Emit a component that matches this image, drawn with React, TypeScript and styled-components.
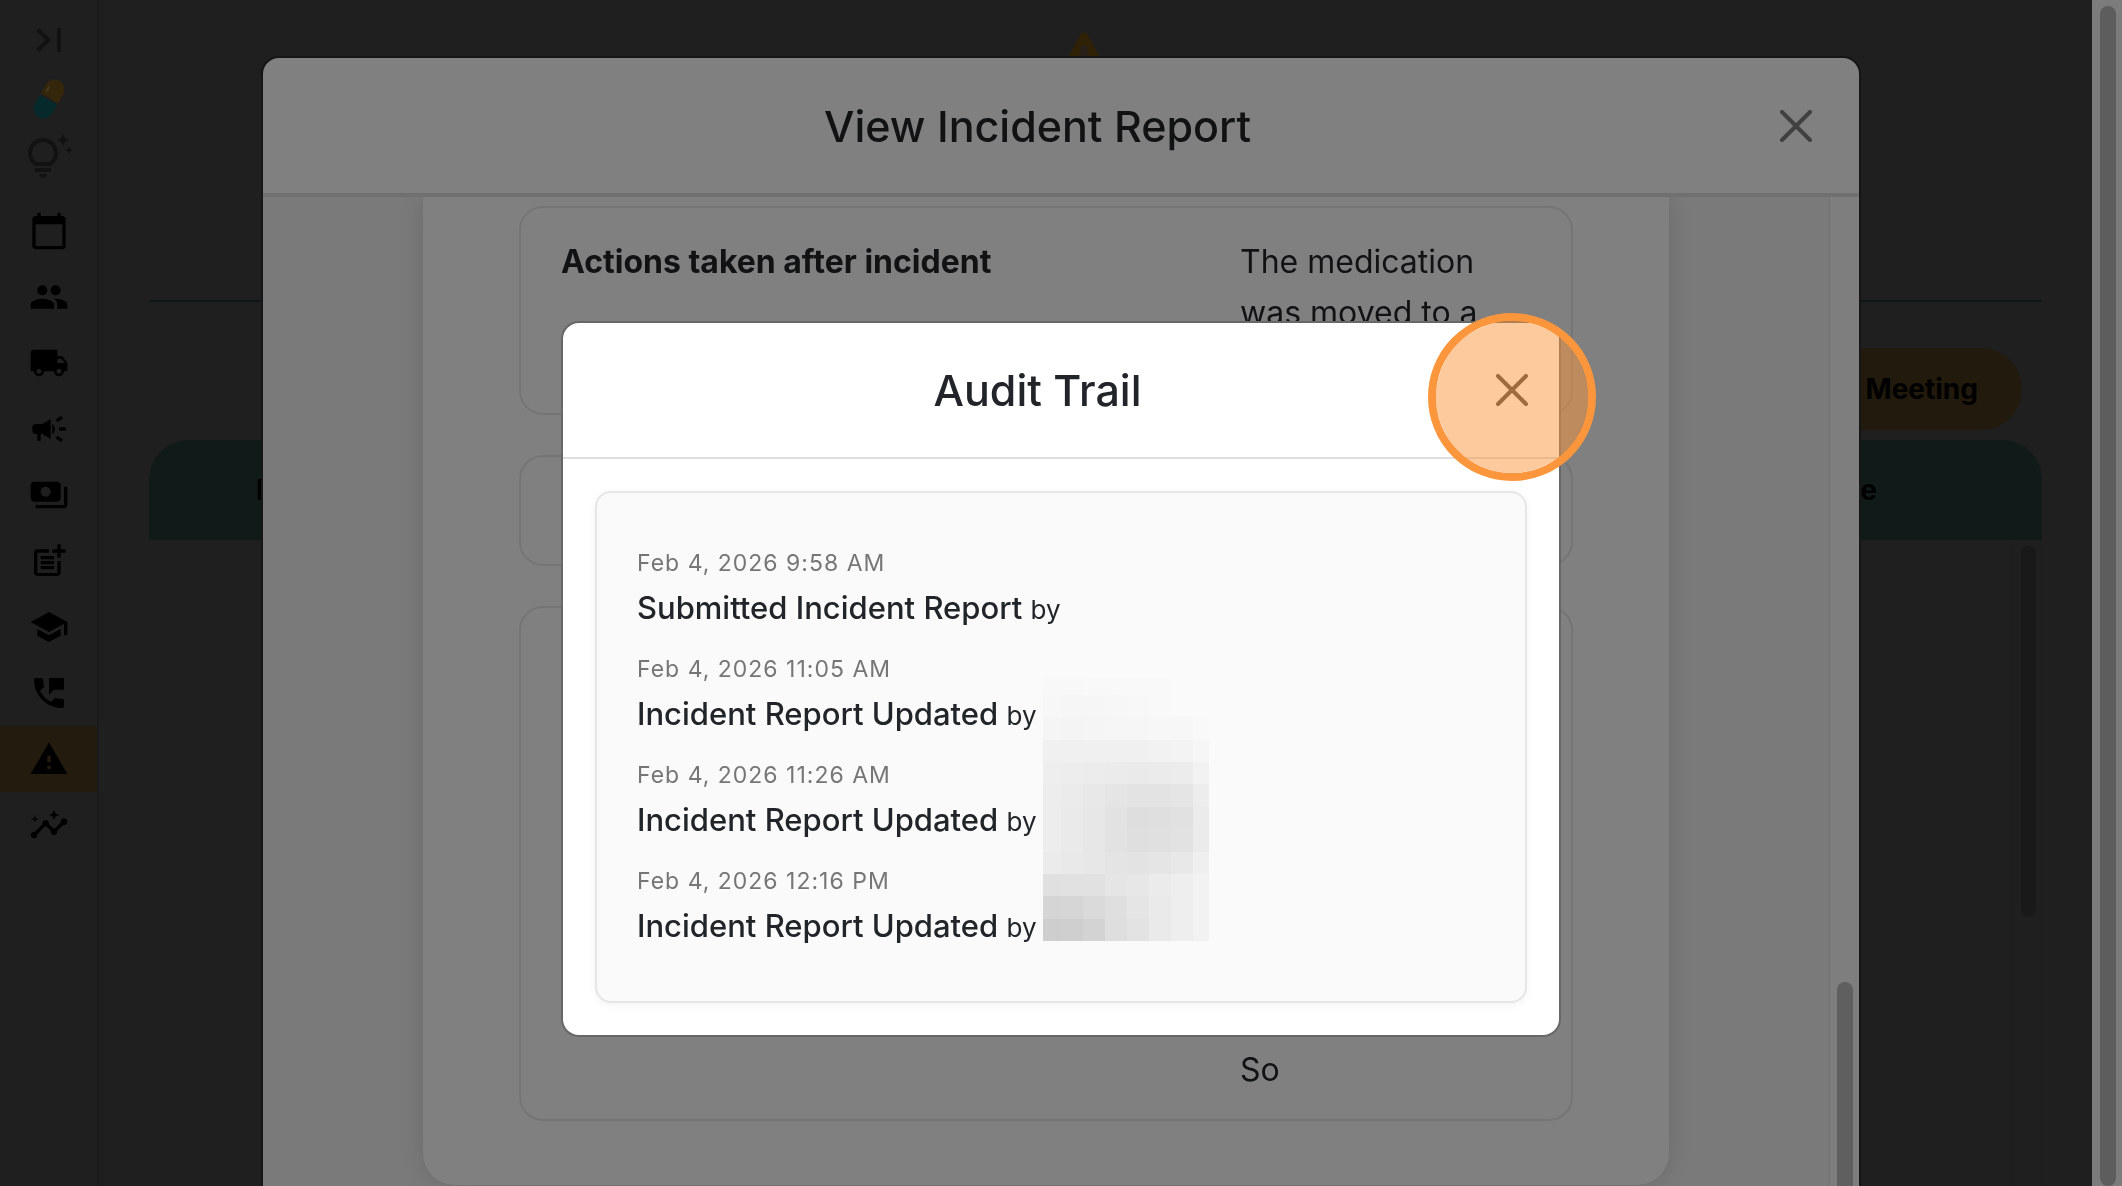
import React from "react";
import styled, { createGlobalStyle } from "styled-components";
import type { IconType } from "react-icons";
import {
  MdCalendarToday,
  MdCampaign,
  MdInsights,
  MdLastPage,
  MdLocalShipping,
  MdOutlineTipsAndUpdates,
  MdPayments,
  MdPeople,
  MdPermPhoneMsg,
  MdPostAdd,
  MdSchool,
  MdWarning,
} from "react-icons/md";

const GlobalStyle = createGlobalStyle`
  *, *::before, *::after { box-sizing: border-box; }
  body {
    margin: 0;
    background: #1f1f1f;
    color: #000;
    font-family: Inter, "Liberation Sans", sans-serif;
    overflow: hidden;
  }
  h1, h2, p, ul, ol { margin: 0; padding: 0; }
  ul, ol { list-style: none; }
  button { font: inherit; }
`;

/* ---------- page behind the dialogs ---------- */

const Shell = styled.div`
  display: flex;
  height: 100vh;
  background: #1f1f1f;
  overflow: hidden;
`;

const Sidebar = styled.nav`
  display: flex;
  flex-direction: column;
  flex: none;
  width: 99px;
  border-right: 2px solid #1a1a1a;
`;

const SidebarTop = styled.div`
  display: flex;
  flex-direction: column;
  align-items: center;
  gap: 11px;
  padding: 16px 0;
  height: 198px;
  color: #121212;
`;

const IconButton = styled.button`
  display: grid;
  place-items: center;
  width: 48px;
  height: 48px;
  padding: 0;
  border: 0;
  background: none;
  color: inherit;
`;

const NavLink = styled.a<{ $active?: boolean }>`
  display: grid;
  place-items: center;
  height: 66px;
  color: #000;
  background: ${(p) => (p.$active ? "#231b0e" : "transparent")};
`;

const Page = styled.main`
  display: flex;
  flex-direction: column;
  flex: 1;
  min-width: 0;
  padding: 0 50px;
`;

const PageHeader = styled.header`
  display: flex;
  justify-content: center;
  height: 302px;
  padding: 32px 24px 0 0;
  border-bottom: 2px solid #0e1717;
`;

const Toolbar = styled.div`
  display: flex;
  justify-content: flex-end;
  padding: 46px 20px 10px;
`;

const MeetingButton = styled.button`
  height: 82px;
  padding: 0 44px;
  border: 0;
  border-radius: 41px;
  background: #211a0d;
  color: #000;
  font-size: 28px;
  font-weight: 700;
`;

const TableArea = styled.div`
  display: flex;
  flex-direction: column;
  flex: 1;
`;

const Table = styled.table`
  width: 100%;
  border-spacing: 0;
  border-radius: 40px 40px 0 0;
  background: #0f1a19;
`;

const HeadCell = styled.th<{ $end?: boolean }>`
  height: 100px;
  padding: ${(p) => (p.$end ? "0 165px 0 0" : "0 0 0 107px")};
  text-align: ${(p) => (p.$end ? "right" : "left")};
  font-size: 28px;
  font-weight: 700;
`;

const TableScroll = styled.div`
  align-self: flex-end;
  width: 30px;
  flex: 1;
  padding: 6px 5px 0 8px;
  border: solid #1d1d1d;
  border-width: 0 1px;
`;

const Thumb = styled.div<{ $color: string; $height: string }>`
  height: ${(p) => p.$height};
  border-radius: 8px;
  background: ${(p) => p.$color};
`;

const WindowScroll = styled.div`
  flex: none;
  width: 30px;
  padding: 6px 6px 0 8px;
  background: #7c7c7c;
`;

/* ---------- dialogs ---------- */

const Layer = styled.div<{ $top: number }>`
  position: fixed;
  inset: 0;
  display: flex;
  justify-content: center;
  align-items: flex-start;
  padding-top: ${(p) => p.$top}px;
`;

const ReportDialog = styled.section`
  display: flex;
  flex-direction: column;
  width: 1596px;
  max-width: calc(100% - 64px);
  height: 100%;
  border-radius: 16px 16px 0 0;
  background: #808080;
  box-shadow: 0 0 0 2px #161616;
  color: #111213;
  overflow: hidden;
`;

const AuditDialog = styled.section`
  width: 996px;
  max-width: calc(100% - 64px);
  border-radius: 16px;
  background: #fff;
  box-shadow: 0 0 0 2px #676767;
  color: #212529;
`;

const DialogHeader = styled.header<{ $line: string; $padding: string }>`
  display: flex;
  align-items: center;
  flex: none;
  padding: ${(p) => p.$padding};
  border-bottom: ${(p) => p.$line};
`;

const DialogTitle = styled.h1`
  flex: 1;
  text-align: center;
  font-size: 43px;
  line-height: 64px;
  font-weight: 500;
`;

const CloseButton = styled.button`
  position: relative;
  width: 32px;
  height: 32px;
  padding: 0;
  border: 0;
  background: none;
  color: #404040;

  svg {
    display: block;
  }
`;

const ClickMarker = styled.span`
  position: absolute;
  top: -61px;
  left: -68px;
  width: 168px;
  height: 168px;
  border: 8px solid #fb963c;
  border-radius: 50%;
  background: rgba(251, 150, 60, 0.5);
  background-clip: padding-box;
  pointer-events: none;
`;

const ReportBody = styled.div`
  display: flex;
  flex: 1;
  min-height: 0;
  background: #7a7a7a;
`;

const ReportScroll = styled.div`
  flex: 1;
  overflow: hidden;
`;

const Paper = styled.div`
  display: flex;
  flex-direction: column;
  gap: 40px;
  width: 1246px;
  max-width: 100%;
  margin: 0 auto;
  padding: 9px 96px 64px;
  border-radius: 0 0 32px 32px;
  background: #808080;
  box-shadow: 0 0 24px rgba(0, 0, 0, 0.12);
`;

const FieldCard = styled.div<{ $height: number }>`
  display: grid;
  grid-template-columns: 7fr 3fr;
  min-height: ${(p) => p.$height}px;
  padding: 28px 40px 24px;
  border: 2px solid #757575;
  border-radius: 24px;
  font-size: 32px;
  line-height: 51px;
`;

const FieldLabel = styled.h2`
  font-size: 32px;
  line-height: 51px;
  font-weight: 700;
`;

const FieldValue = styled.p<{ $bottom?: boolean }>`
  align-self: ${(p) => (p.$bottom ? "end" : "start")};
`;

const ReportGutter = styled.div`
  display: flex;
  flex-direction: column;
  justify-content: flex-end;
  flex: none;
  width: 30px;
  padding: 0 6px 0 7px;
  border-left: 1px solid #727272;
  background: #7e7e7e;
`;

const ReportThumb = styled.div`
  height: 204px;
  border-radius: 8px 8px 0 0;
  background: #5f5f5f;
`;

const AuditBody = styled.div`
  padding: 32px;
`;

const AuditCard = styled.div`
  position: relative;
  padding: 52px 40px 48px;
  border: 2px solid #e6e6e6;
  border-radius: 16px;
  background: #fafafa;
  box-shadow: 0 2px 8px rgba(0, 0, 0, 0.05);
`;

const AuditList = styled.ol`
  display: flex;
  flex-direction: column;
  gap: 16px;
`;

const Stamp = styled.time`
  display: block;
  color: #767676;
  font-size: 23px;
  line-height: 36px;
  letter-spacing: 1px;
`;

const Action = styled.p`
  font-size: 31px;
  line-height: 54px;
  font-weight: 500;
`;

const By = styled.span`
  font-size: 26px;
  line-height: 1;
  font-weight: 400;
`;

const Redaction = styled.div`
  position: absolute;
  top: 185px;
  left: 446px;
  display: grid;
  grid-template-columns: 18px repeat(6, 22px) 16px;
  grid-template-rows: 17px repeat(11, 1fr);
  height: 263px;
`;

const Block = styled.span<{ $shade: string }>`
  background: ${(p) => p.$shade};
`;

/* ---------- drawings ---------- */

const Cross = () => (
  <svg width="32" height="32" viewBox="0 0 32 32" fill="none" stroke="currentColor" strokeWidth="4" strokeLinecap="round" aria-hidden="true">
    <path d="M2 2 30 30M30 2 2 30" />
  </svg>
);

const Pill = () => (
  <svg width="48" height="48" viewBox="0 0 48 48" aria-hidden="true">
    <g transform="rotate(30 24 24)">
      <path d="M14 25v10a10 10 0 0 0 20 0v-10z" fill="#062a2b" />
      <path d="M14 23v-10a10 10 0 0 1 20 0v10z" fill="#34260b" />
      <path d="M18 18v-4" stroke="#46391f" strokeWidth="2" strokeLinecap="round" />
    </g>
  </svg>
);

const WarningSign = () => (
  <svg width="64" height="60" viewBox="0 0 64 60" aria-hidden="true">
    <path d="M32 5 58 54H6z" fill="#2f2106" stroke="#2f2106" strokeWidth="9" strokeLinejoin="round" />
    <path d="M32 17v18" stroke="#25211a" strokeWidth="7" strokeLinecap="round" />
  </svg>
);

/* ---------- data ---------- */

const navItems: { label: string; icon: IconType; active?: boolean }[] = [
  { label: "Calendar", icon: MdCalendarToday },
  { label: "People", icon: MdPeople },
  { label: "Deliveries", icon: MdLocalShipping },
  { label: "Announcements", icon: MdCampaign },
  { label: "Payments", icon: MdPayments },
  { label: "Notes", icon: MdPostAdd },
  { label: "Training", icon: MdSchool },
  { label: "Messages", icon: MdPermPhoneMsg },
  { label: "Incidents", icon: MdWarning, active: true },
  { label: "Insights", icon: MdInsights },
];

const auditEntries = [
  { at: "Feb 4, 2026 9:58 AM", action: "Submitted Incident Report" },
  { at: "Feb 4, 2026 11:05 AM", action: "Incident Report Updated" },
  { at: "Feb 4, 2026 11:26 AM", action: "Incident Report Updated" },
  { at: "Feb 4, 2026 12:16 PM", action: "Incident Report Updated" },
];

const shades = [
  "f8 f8 f9 f9 f9 f9 fa fa",
  "f7 f6 f6 f7 f8 f9 fa fa",
  "f5 f4 f5 f6 f6 f7 f7 f9",
  "f0 f0 f0 f0 f0 f2 f3 f6",
  "ee ed ec eb ea eb ec f2",
  "ed eb e8 e5 e3 e3 e5 ed",
  "ed ea e7 e2 de df e1 eb",
  "ed ea e7 e2 df e0 e2 eb",
  "eb e9 e7 e4 e3 e5 e8 ef",
  "e0 e1 e1 e5 e7 eb ee f2",
  "d5 d6 da df e5 ea ee f2",
  "ce cf d3 de e3 ea ee f2",
]
  .join(" ")
  .split(" ")
  .map((v) => `#${v}${v}${v}`);

export default function App() {
  return (
    <>
      <GlobalStyle />
      <Shell>
        <Sidebar aria-label="Main">
          <SidebarTop>
            <IconButton aria-label="Expand menu">
              <MdLastPage size={48} />
            </IconButton>
            <IconButton aria-label="Medication">
              <Pill />
            </IconButton>
            <IconButton aria-label="Tips">
              <MdOutlineTipsAndUpdates size={48} />
            </IconButton>
          </SidebarTop>
          {navItems.map(({ label, icon: Icon, active }) => (
            <NavLink key={label} href="#" aria-label={label} $active={active}>
              <Icon size={40} />
            </NavLink>
          ))}
        </Sidebar>
        <Page>
          <PageHeader>
            <WarningSign />
          </PageHeader>
          <Toolbar>
            <MeetingButton>Meeting</MeetingButton>
          </Toolbar>
          <TableArea>
            <Table>
              <thead>
                <tr>
                  <HeadCell scope="col">Date</HeadCell>
                  <HeadCell scope="col" $end>
                    Name
                  </HeadCell>
                </tr>
              </thead>
            </Table>
            <TableScroll>
              <Thumb $color="#191919" $height="371px" />
            </TableScroll>
          </TableArea>
        </Page>
        <WindowScroll>
          <Thumb $color="#5d5d5d" $height="100%" />
        </WindowScroll>
      </Shell>

      <Layer $top={58}>
        <ReportDialog role="dialog" aria-labelledby="report-title">
          <DialogHeader $line="4px solid #707070" $padding="36px 47px 35px 32px">
            <DialogTitle id="report-title">View Incident Report</DialogTitle>
            <CloseButton aria-label="Close report">
              <Cross />
            </CloseButton>
          </DialogHeader>
          <ReportBody>
            <ReportScroll>
              <Paper>
                <FieldCard $height={209}>
                  <FieldLabel>Actions taken after incident</FieldLabel>
                  <FieldValue>The medication was moved to a</FieldValue>
                </FieldCard>
                <FieldCard $height={111}>
                  <FieldLabel>S</FieldLabel>
                </FieldCard>
                <FieldCard $height={515}>
                  <FieldLabel>A</FieldLabel>
                  <FieldValue $bottom>So</FieldValue>
                </FieldCard>
              </Paper>
            </ReportScroll>
            <ReportGutter>
              <ReportThumb />
            </ReportGutter>
          </ReportBody>
        </ReportDialog>
      </Layer>

      <Layer $top={323}>
        <AuditDialog role="dialog" aria-modal="true" aria-labelledby="audit-title">
          <DialogHeader $line="2px solid #dfdfdf" $padding="35px 31px 35px 16px">
            <DialogTitle id="audit-title">Audit Trail</DialogTitle>
            <CloseButton aria-label="Close audit trail">
              <Cross />
              <ClickMarker />
            </CloseButton>
          </DialogHeader>
          <AuditBody>
            <AuditCard>
              <AuditList>
                {auditEntries.map((entry) => (
                  <li key={entry.at}>
                    <Stamp>{entry.at}</Stamp>
                    <Action>
                      {entry.action} <By>by</By>
                    </Action>
                  </li>
                ))}
              </AuditList>
              <Redaction aria-hidden="true">
                {shades.map((shade, i) => (
                  <Block key={i} $shade={shade} />
                ))}
              </Redaction>
            </AuditCard>
          </AuditBody>
        </AuditDialog>
      </Layer>
    </>
  );
}
